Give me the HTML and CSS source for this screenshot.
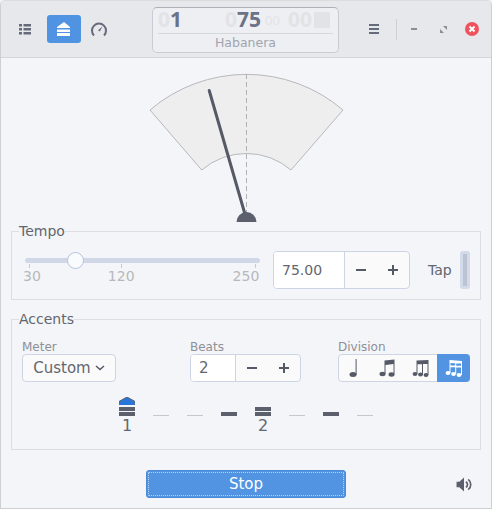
FILE: index.html
```html
<!DOCTYPE html>
<html lang="en">
<head>
    <meta charset="utf-8">
    <meta name="viewport" content="width=device-width, initial-scale=1.0">
    <title>Metronome</title>
    <link rel="stylesheet" href="styles.css">
</head>
<body>
    <div class="window">
        <!-- header bar -->
        <header class="header">
            <div class="header-left">
                <button class="head-btn list-btn" aria-label="Trainer">
                    <svg width="12" height="11" viewBox="0 0 12 11"><path d="M0 0h3v2.500H0zM4.500 0H12v2.500H4.500zM0 4h3v2.500H0zM4.500 4H12v2.500H4.500zM0 8h3v2.500H0zM4.500 8H12v2.500H4.500z"/></svg>
                </button>
                <button class="head-btn accent-btn" aria-label="Accents">
                    <svg width="14" height="14" viewBox="0 0 14 14"><path d="M0 5 7 0l6 5v1H0zM0 7.500h13V10H0zM0 11h13v3H0z"/></svg>
                </button>
                <button class="head-btn gauge-btn" aria-label="Tempo">
                    <svg width="16" height="15" viewBox="0 0 16 15"><path d="M3 13.500a7 7 0 1 1 10 0" fill="none" stroke="#666b7c" stroke-width="2"/><path d="M11.500 4.500 8.800 9.500 7 8.300z" fill="#666b7c"/></svg>
                </button>
            </div>

            <div class="lcd">
                <div class="lcd-top">
                    <span class="lcd-big"><i>0</i>1</span>
                    <span class="lcd-big lcd-tempo"><i>0</i>75</span>
                    <span class="lcd-small">00</span>
                    <span class="lcd-big lcd-frac"><i>00</i></span>
                    <span class="lcd-square"></span>
                </div>
                <div class="lcd-name">Habanera</div>
            </div>

            <div class="header-right">
                <svg class="hamburger" width="10" height="10" viewBox="0 0 10 10"><path d="M0 0h10v2H0zM0 4h10v2H0zM0 8h10v2H0z"/></svg>
                <span class="head-sep"></span>
                <span class="win-min"></span>
                <svg class="win-restore" width="7" height="7" viewBox="0 0 7 7"><path d="M3 0h4v4zM0 3l4 4H0z" fill="#8b8e97"/></svg>
                <svg class="win-close" width="14" height="14" viewBox="0 0 14 14"><circle cx="7" cy="7" r="7" fill="#f0525e"/><path d="M4.500 4.500l5 5M9.500 4.500l-5 5" stroke="#fff" stroke-width="2"/></svg>
            </div>
        </header>

        <main class="main">
            <!-- needle -->
            <svg class="meter" width="470" height="164" viewBox="11 58 470 164">
                <path d="M150 110A148.500 148.500 0 0 1 343 110L291 170A68.500 68.500 0 0 0 201.700 170Z" fill="#eeeeef" stroke="#b7b7bc" stroke-width="1"/>
                <path d="M246.500 74V214" stroke="#b0b1b7" stroke-dasharray="5 3" fill="none"/>
                <path d="M209.200 90.500 245.500 216" stroke="#555a66" stroke-width="3" stroke-linecap="round"/>
                <path d="M236.500 222a10 10 0 0 1 20 0z" fill="#5c606d"/>
            </svg>

            <fieldset class="frame tempo">
                <legend>Tempo</legend>
                <div class="tempo-row">
                    <div class="slider">
                        <div class="track"><span class="knob"></span></div>
                        <div class="ticks"><span></span><span></span><span></span></div>
                        <div class="marks">
                            <span class="mark-30">30</span>
                            <span class="mark-120">120</span>
                            <span class="mark-250">250</span>
                        </div>
                    </div>
                    <div class="spin spin-tempo">
                        <span class="spin-value">75.00</span>
                        <button class="spin-btn" aria-label="Decrease"><svg width="10" height="10" viewBox="0 0 10 10"><path d="M0 4h10v2H0z"/></svg></button>
                        <button class="spin-btn" aria-label="Increase"><svg width="10" height="10" viewBox="0 0 10 10"><path d="M0 4h4V0h2v4h4v2H6v4H4V6H0z"/></svg></button>
                    </div>
                    <span class="tap">Tap</span>
                    <span class="tap-bar"><span></span></span>
                </div>
            </fieldset>

            <fieldset class="frame accents">
                <legend>Accents</legend>
                <div class="controls">
                    <div class="control control-meter">
                        <label>Meter</label>
                        <button class="combo">Custom
                            <svg width="10" height="6" viewBox="0 0 10 6"><path d="M1 1l4 3.500L9 1" fill="none" stroke="#555a66" stroke-width="1.500"/></svg>
                        </button>
                    </div>
                    <div class="control control-beats">
                        <label>Beats</label>
                        <div class="spin spin-beats">
                            <span class="spin-value">2</span>
                            <button class="spin-btn" aria-label="Decrease"><svg width="10" height="10" viewBox="0 0 10 10"><path d="M0 4h10v2H0z"/></svg></button>
                            <button class="spin-btn" aria-label="Increase"><svg width="10" height="10" viewBox="0 0 10 10"><path d="M0 4h4V0h2v4h4v2H6v4H4V6H0z"/></svg></button>
                        </div>
                    </div>
                    <div class="control">
                        <label>Division</label>
                        <div class="division">
                            <button class="div-btn" aria-label="Quarter">
                                <svg width="20" height="20" viewBox="0 0 20 20"><ellipse cx="8" cy="16.500" rx="3.500" ry="2.500"/><path d="M10.600 1h1v16h-1z"/></svg>
                            </button>
                            <button class="div-btn" aria-label="Eighths">
                                <svg width="20" height="20" viewBox="0 0 20 20"><ellipse cx="4.500" cy="16" rx="3" ry="2.200"/><ellipse cx="13.500" cy="16.500" rx="3" ry="2.200"/><path d="M6.500 2.500l10-1V16h-1V6l-8 1v9h-1z"/></svg>
                            </button>
                            <button class="div-btn" aria-label="Triplets">
                                <svg width="20" height="20" viewBox="0 0 20 20"><ellipse cx="4" cy="16" rx="2.400" ry="2"/><ellipse cx="9.500" cy="16.500" rx="2.400" ry="2"/><ellipse cx="15" cy="17" rx="2.400" ry="2"/><path d="M5.500 2.500 17.500 2v15h-1V6H12v11h-1V6.300H6.500V16h-1z"/></svg>
                            </button>
                            <button class="div-btn div-active" aria-label="Sixteenths">
                                <svg width="20" height="20" viewBox="0 0 20 20"><ellipse cx="4" cy="15" rx="2.400" ry="2"/><ellipse cx="9.500" cy="16" rx="2.400" ry="2"/><ellipse cx="15" cy="17" rx="2.400" ry="2"/><path d="M5.500 2 18 3v14h-1V9.500h-4.800V16h-1V9.300H6.500V15h-1zM6.500 5v2.500h4.700V5.300zM12.200 5.400v2.300H17V5.600z"/></svg>
                            </button>
                        </div>
                    </div>
                </div>

                <div class="beats-row">
                    <div class="beat">
                        <svg width="16" height="20" viewBox="0 0 16 20"><path d="M0 8V4.500L8 0l8 4.500V8z" fill="#2a76d8"/><path d="M0 8V4.500L8 0l8 4.500V8" fill="none" stroke="#5c606d"/><path d="M0 10h16v4H0zM0 15h16v4H0z" fill="#5c606d"/></svg>
                        <span>1</span>
                    </div>
                    <div class="beat"><svg width="16" height="20" viewBox="0 0 16 20"><path d="M0 18h16v1H0z" fill="#c8c8ca"/></svg></div>
                    <div class="beat"><svg width="16" height="20" viewBox="0 0 16 20"><path d="M0 18h16v1H0z" fill="#c8c8ca"/></svg></div>
                    <div class="beat"><svg width="16" height="20" viewBox="0 0 16 20"><path d="M0 15h16v4H0z" fill="#5c606d"/></svg></div>
                    <div class="beat">
                        <svg width="16" height="20" viewBox="0 0 16 20"><path d="M0 10h16v4H0zM0 15h16v4H0z" fill="#5c606d"/></svg>
                        <span>2</span>
                    </div>
                    <div class="beat"><svg width="16" height="20" viewBox="0 0 16 20"><path d="M0 18h16v1H0z" fill="#c8c8ca"/></svg></div>
                    <div class="beat"><svg width="16" height="20" viewBox="0 0 16 20"><path d="M0 15h16v4H0z" fill="#5c606d"/></svg></div>
                    <div class="beat"><svg width="16" height="20" viewBox="0 0 16 20"><path d="M0 18h16v1H0z" fill="#c8c8ca"/></svg></div>
                </div>
            </fieldset>

            <footer class="footer">
                <button class="stop">Stop</button>
                <svg class="speaker" width="17" height="15" viewBox="0 0 17 16"><path d="M0 5h3l5-4.500v15L3 11H0z" fill="#5c606d"/><path d="M10 5a3.500 3.500 0 0 1 0 6M12.500 2.500a7 7 0 0 1 0 11" fill="none" stroke="#5c606d" stroke-width="1.800"/></svg>
            </footer>
        </main>
    </div>
</body>
</html>
```

FILE: styles.css
```css
html, body {
    margin: 0;
    padding: 0;
    background: #f4f5f8;
}

body {
    font-family: "DejaVu Sans", sans-serif;
    color: #62666f;
}

button {
    font-family: inherit;
    color: inherit;
    margin: 0;
    padding: 0;
    border: none;
    background: none;
}

.window {
    box-sizing: border-box;
    width: 492px;
    height: 509px;
    overflow: hidden;
    background: #f4f5f8;
    border: 1px solid #cfcfd2;
    border-top-color: #dcdcdf;
    border-radius: 5px 5px 0 0;
}

/* header bar */
.header {
    box-sizing: border-box;
    height: 57px;
    display: flex;
    align-items: center;
    background: #e7e8eb;
    border-bottom: 1px solid #d4d5d9;
}

.header-left {
    width: 151px;
    display: flex;
    align-items: center;
    padding-left: 18px;
    box-sizing: border-box;
}

.head-btn {
    display: flex;
    align-items: center;
    justify-content: center;
    fill: #666b7c;
}

.list-btn {
    width: 12px;
    margin-right: 16px;
}

.accent-btn {
    width: 34px;
    height: 28px;
    background: #4f93e2;
    border-radius: 3px;
    fill: #fff;
    margin-right: 10px;
}

.gauge-btn {
    width: 16px;
}

.lcd {
    box-sizing: border-box;
    width: 187px;
    height: 46px;
    margin-top: 2px;
    padding: 0 5px;
    background: #eeeff2;
    border: 1px solid #c9ccd3;
    border-top-color: #adb0ba;
    border-radius: 5px;
}

.lcd-top {
    height: 25px;
    display: flex;
    align-items: center;
    border-bottom: 1px solid #d6d8de;
    font-family: "Noto Sans", sans-serif;
}

.lcd-big {
    margin-top: -3px;
    font-size: 21px;
    font-weight: bold;
    line-height: 24px;
    color: #6b7186;
}

.lcd-big i {
    font-style: normal;
    color: #e2e3e7;
}

.lcd-tempo {
    margin-left: 43px;
}

.lcd-small {
    margin: -2px 0 0 4px;
    font-size: 13px;
    color: #e2e3e7;
}

.lcd-frac {
    margin-left: 8px;
}

.lcd-square {
    width: 16px;
    height: 16px;
    margin: -1px 0 0 2px;
    background: #e2e3e7;
}

.lcd-name {
    text-align: center;
    font-size: 12.5px;
    line-height: 18px;
    color: #a0a4b0;
}

.header-right {
    flex: 1;
    display: flex;
    align-items: center;
    padding-left: 30px;
}

.hamburger {
    fill: #666b7c;
    margin-right: 17px;
}

.head-sep {
    width: 1px;
    height: 21px;
    background: #cfd0d5;
    margin-right: 14px;
}

.win-min {
    width: 6px;
    height: 2px;
    background: #8b8e97;
    margin-right: 23px;
}

.win-restore {
    margin-right: 18px;
}

/* frames */
.main {
    padding: 0 10px;
}

.meter {
    display: block;
}

.frame {
    margin: 0;
    border: 1px solid #dcdee3;
    min-width: 0;
}

.frame legend {
    padding: 0;
    font-size: 14px;
    line-height: 19px;
}

.tempo {
    padding: 10px 10px 10px 13px;
}

.tempo legend {
    margin-left: -6px;
}

.tempo-row {
    display: flex;
    align-items: flex-start;
}

.slider {
    width: 235px;
    padding-top: 7px;
    margin-right: 13px;
}

.track {
    position: relative;
    height: 5px;
    border-radius: 3px;
    background: #d0d8e8;
}

.knob {
    position: absolute;
    left: 42px;
    top: -6px;
    box-sizing: border-box;
    width: 17px;
    height: 17px;
    background: #fafbfd;
    border: 1px solid #b4c3e2;
    border-radius: 50%;
}

.ticks {
    display: flex;
    height: 4px;
    padding: 1px 0 0 4px;
}

.ticks span {
    width: 1px;
    height: 4px;
    background: #c8c8ca;
}

.ticks span + span {
    margin-left: 91px;
}

.ticks span + span + span {
    margin-left: 133px;
}

.marks {
    display: flex;
    font-size: 14px;
    line-height: 17px;
    color: #b8b8bb;
}

.mark-30 {
    margin-left: -2px;
}

.mark-120 {
    margin-left: 67px;
}

.mark-250 {
    margin-left: 98px;
}

.spin {
    display: flex;
    align-items: stretch;
    box-sizing: border-box;
    background: #fafafb;
    border: 1px solid #cdd5e5;
    border-radius: 4px;
}

.spin-tempo {
    width: 137px;
    height: 38px;
    font-size: 14px;
}

.spin-beats {
    width: 111px;
    height: 28px;
    font-size: 15px;
}

.spin-value {
    display: flex;
    align-items: center;
    background: #fff;
    border-right: 1px solid #cdd5e5;
    border-radius: 3px 0 0 3px;
    padding-left: 8px;
    box-sizing: border-box;
}

.spin-tempo .spin-value {
    width: 71px;
}

.spin-beats .spin-value {
    width: 45px;
}

.spin-btn {
    flex: 1;
    display: flex;
    align-items: center;
    justify-content: center;
    fill: #555a66;
}

.tap {
    margin: 10px 8px 0 18px;
    font-size: 14px;
    line-height: 18px;
}

.tap-bar {
    box-sizing: border-box;
    width: 10px;
    height: 38px;
    padding: 3px 3px;
    background: #d3daea;
    border-radius: 3px;
}

.tap-bar span {
    display: block;
    height: 100%;
    background: #bcc3d2;
}

.accents {
    margin-top: 10px;
    padding: 10px 10px 0;
    height: 140px;
    box-sizing: border-box;
}

.accents legend {
    margin-left: -3px;
}

.controls {
    display: flex;
}

.control label {
    display: block;
    padding-top: 1px;
    font-size: 12px;
    line-height: 14px;
    color: #8e9096;
}

.control-meter {
    width: 168px;
}

.control-beats {
    width: 148px;
}

.combo {
    box-sizing: border-box;
    width: 94px;
    height: 28px;
    display: flex;
    align-items: center;
    justify-content: center;
    gap: 4px;
    font-size: 15px;
    background: #fafafb;
    border: 1px solid #cdd5e5;
    border-radius: 4px;
}

.division {
    display: flex;
    box-sizing: border-box;
    width: 132px;
    height: 28px;
    background: #fafafb;
    border: 1px solid #cdd5e5;
    border-radius: 4px;
}

.div-btn {
    flex: 1;
    display: flex;
    align-items: center;
    justify-content: center;
    fill: #555a66;
}

.div-active {
    background: #5294e2;
    fill: #fff;
    margin: -1px -1px -1px 0;
    border-radius: 0 4px 4px 0;
}

.beats-row {
    display: flex;
    justify-content: center;
    gap: 18px;
    margin-top: 15px;
}

.beat {
    width: 16px;
    display: flex;
    flex-direction: column;
    align-items: center;
}

.beat span {
    font-size: 16px;
    line-height: 18px;
}

/* bottom */
.footer {
    display: grid;
    grid-template-columns: 1fr 200px 1fr;
    align-items: center;
    margin-top: 20px;
}

.stop {
    grid-column: 2;
    height: 28px;
    background: #5294e2;
    color: #fff;
    font-size: 15px;
    border: 1px solid #4a8ad6;
    border-radius: 3px;
    outline: 1px dotted rgba(255, 255, 255, 0.6);
    outline-offset: -3px;
}

.speaker {
    grid-column: 3;
    justify-self: end;
    margin-right: 8px;
}
```
